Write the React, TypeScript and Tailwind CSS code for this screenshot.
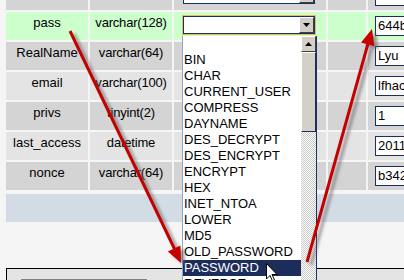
import React from 'react';

type Row = { name: string; type: string; val: string; bg: string };

const rows: Row[] = [
  { name: '', type: '', val: '', bg: 'bg-[#d4d4d4]' },
  { name: 'pass', type: 'varchar(128)', val: '644b', bg: 'bg-[#ccffcc]' },
  { name: 'RealName', type: 'varchar(64)', val: 'Lyu', bg: 'bg-[#d4d4d4]' },
  { name: 'email', type: 'varchar(100)', val: 'lfhac', bg: 'bg-[#e4e4e4]' },
  { name: 'privs', type: 'tinyint(2)', val: '1', bg: 'bg-[#d4d4d4]' },
  { name: 'last_access', type: 'datetime', val: '2011', bg: 'bg-[#e4e4e4]' },
  { name: 'nonce', type: 'varchar(64)', val: 'b342', bg: 'bg-[#d4d4d4]' },
];

const funcs = [
  '', 'BIN', 'CHAR', 'CURRENT_USER', 'COMPRESS', 'DAYNAME', 'DES_DECRYPT', 'DES_ENCRYPT',
  'ENCRYPT', 'HEX', 'INET_NTOA', 'LOWER', 'MD5', 'OLD_PASSWORD', 'PASSWORD', 'REVERSE',
];

const Btn: React.FC<{ up?: boolean; className?: string }> = ({ up, className }) => (
  <div className={`flex items-center justify-center bg-[#d4d0c8] border-t border-l border-t-white border-l-white border-r border-b border-r-[#404040] border-b-[#404040] ${className ?? ''}`}>
    <svg width="7" height="4" viewBox="0 0 7 4">
      {up ? <polygon points="0,4 7,4 3.5,0" fill="#000" /> : <polygon points="0,0 7,0 3.5,4" fill="#000" />}
    </svg>
  </div>
);

const FuncSelect: React.FC<{ open?: boolean }> = ({ open }) => (
  <div className={`relative ml-[9px] mt-[4px] w-[132px] h-[18px] bg-white border border-[#1b2f60] flex justify-end ${open ? 'outline outline-1 outline-[#e6bd5c]' : ''}`}>
    <Btn className="w-[15px] h-full" />
    {open && (
      <div className="absolute z-10 left-[-2px] top-[19px] w-[135px] h-[262px] bg-white flex border-l border-l-[#8fa7c4] border-r border-r-[#1b2f60]">
        <div className="flex-1 flex flex-col">
          {funcs.map((f, i) => (
            <div
              key={i}
              className={`h-[16px] shrink-0 leading-[16px] pl-[1px] text-[13px] whitespace-nowrap ${f === 'PASSWORD' ? 'bg-[#1c2d5c] text-white' : 'text-black'}`}
            >
              {f}
            </div>
          ))}
        </div>
        <div className="w-[15px] flex flex-col">
          <Btn up className="h-[16px] w-full shrink-0" />
          <div className="h-[80px] shrink-0 bg-[#d4d0c8] border-t border-l border-t-white border-l-white border-r border-b border-r-[#1b2f60] border-b-[#1b2f60]" />
          <div className="flex-1 bg-[repeating-conic-gradient(#c8c8c8_0_25%,#ffffff_0_50%)] bg-[length:2px_2px]" />
        </div>
      </div>
    )}
  </div>
);

const App: React.FC = () => {
  return (
    <div className="relative w-[404px] h-[280px] overflow-hidden bg-[#f5f5f5] text-black font-['Liberation_Sans',Arial,sans-serif]">
      {/* table */}
      <div className="flex flex-col gap-[2px] pl-[6px] mt-[-18px]">
        {rows.map((r, i) => (
          <div key={i} className="flex gap-[2px] h-[28px] text-[13px] leading-[16px]">
            <div className={`w-[82px] shrink-0 ${r.bg} text-center pt-[3px] whitespace-nowrap`}>{r.name}</div>
            <div className={`w-[82px] shrink-0 ${r.bg} text-center pt-[3px] whitespace-nowrap tracking-[-0.2px]`}>{r.type}</div>
            <div className={`w-[152px] shrink-0 ${r.bg}`}>
              {(i === 0 || i === 1) && <FuncSelect open={i === 1} />}
            </div>
            <div className={`w-[38px] shrink-0 ${r.bg}`} />
            <div className={`flex-1 ${r.bg}`}>
              <div className="ml-[7px] mt-[4px] h-[20px] w-[60px] bg-white border border-[#1b2f60] pl-[2px] leading-[18px] overflow-hidden">
                {r.val}
              </div>
            </div>
          </div>
        ))}
      </div>

      {/* footer bars */}
      <div className="mt-[4px] ml-[6px] h-[28px] bg-[#d3dce4]" />
      <div className="h-[46px]" />
      <div className="ml-[6px] h-[20px] border-t border-l border-black bg-[#e4e4e4] pt-[10px] pl-[14px]">
        <div className="w-[126px] border-t-2 border-[#808080]" />
      </div>

      {/* annotation arrows */}
      <svg className="absolute left-0 top-0 z-20 pointer-events-none" width="404" height="280" viewBox="0 0 404 280">
        <defs>
          <filter id="sh" x="-20%" y="-20%" width="140%" height="140%">
            <feGaussianBlur stdDeviation="1.6" />
          </filter>
        </defs>
        <g filter="url(#sh)" opacity="0.6" transform="translate(4,3)">
          <line x1="70" y1="31" x2="176" y2="252" stroke="#606060" strokeWidth="3" />
          <polygon points="181,263 167.8,251.6 180.4,245.6" fill="#606060" />
          <line x1="307" y1="262" x2="369" y2="40" stroke="#606060" strokeWidth="3" />
          <polygon points="372,29 374.4,46.3 361,42.5" fill="#606060" />
        </g>
        <line x1="70" y1="31" x2="176" y2="252" stroke="#c40000" strokeWidth="3" />
        <polygon points="181,263 167.8,251.6 180.4,245.6" fill="#c40000" />
        <line x1="307" y1="262" x2="369" y2="40" stroke="#c40000" strokeWidth="3" />
        <polygon points="372,29 374.4,46.3 361,42.5" fill="#c40000" />
      </svg>

      {/* mouse pointer */}
      <svg className="absolute left-[266px] top-[263px] z-30" width="12" height="19" viewBox="0 0 12 19">
        <polygon points="0.5,0.5 0.5,16 4,12.5 6.5,18 8.5,17 6,11.5 11,11.5" fill="#fff" stroke="#000" strokeWidth="1" />
      </svg>
    </div>
  );
};

export default App;
